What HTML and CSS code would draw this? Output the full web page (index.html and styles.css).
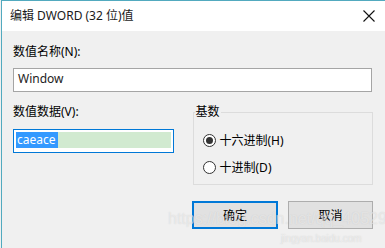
FILE: index.html
```html
<!DOCTYPE html>
<html lang="zh-CN">
<head>
    <meta charset="UTF-8">
    <meta name="viewport" content="width=device-width, initial-scale=1.0">
    <title>编辑 DWORD (32 位)值</title>
    <link rel="stylesheet" href="styles.css">
</head>
<body>
    <div class="window">
        <div class="titlebar">
            <span class="title">编辑 DWORD (32 位)值</span>
            <svg class="close" width="12" height="12" viewBox="0 0 12 12">
                <path d="M0.5 0.5 L11.5 11.5 M11.5 0.5 L0.5 11.5" stroke="#111" stroke-width="1.1" fill="none"/>
            </svg>
        </div>

        <div class="content">
            <div class="label">数值名称(N):</div>
            <div class="textbox name-box">Window</div>

            <div class="data-row">
                <div class="data-col">
                    <div class="label">数值数据(V):</div>
                    <div class="textbox data-box">
                        <div class="data-fill"><span class="selected">caeace</span></div>
                    </div>
                </div>

                <fieldset class="base-group">
                    <legend>基数</legend>
                    <div class="radio-row">
                        <span class="radio checked"></span>
                        <span>十六进制(H)</span>
                    </div>
                    <div class="radio-row">
                        <span class="radio"></span>
                        <span>十进制(D)</span>
                    </div>
                </fieldset>
            </div>

            <div class="buttons">
                <div class="btn btn-default">确定</div>
                <div class="btn">取消</div>
            </div>
        </div>

        <!-- watermark from the original screenshot -->
        <div class="watermark">https://blog.csdn.net/qq_40529</div>
        <div class="watermark-small">jingyan.baidu.com</div>
    </div>
</body>
</html>
```

FILE: styles.css
```css
body {
    margin: 0;
    background-color: #f0f0f0;
    font-family: "Noto Sans", "Noto Sans CJK SC", sans-serif;
    font-size: 12px;
    color: #000;
}
.window {
    position: relative;
    height: 247px;
    margin-left: 1px;
    border-top: 1px solid #52aabf;
    border-left: 1px solid #52aabf;
    background: #f0f0f0;
    overflow: hidden;
}
.titlebar {
    height: 30px;
    background: #fff;
    display: flex;
    align-items: center;
    padding-left: 8px;
    padding-right: 10px;
}
.title {
    flex: 1;
    color: #1a1a1a;
    line-height: 16px;
}
.close {
    display: block;
}
.content {
    padding: 13px 12px 0 11px;
}
.label {
    line-height: 16px;
}
.textbox {
    box-sizing: border-box;
    height: 24px;
    margin-top: 8px;
    line-height: 20px;
}
.name-box {
    width: 359px;
    border: 1px solid #a5a5a5;
    background: #fff;
    padding-left: 4px;
    color: #222;
}
.data-row {
    display: flex;
    margin-top: 12px;
}
.data-col {
    width: 161px;
}
.data-box {
    margin-top: 9px;
    border: 1px solid #0078d7;
    padding: 2px;
    background: #fff;
}
.data-fill {
    height: 16px;
    background: #d1ead0;
    line-height: 16px;
}
.selected {
    display: inline-block;
    height: 16px;
    padding: 0 2px 0 1px;
    background: #3399ff;
    color: #fff;
}
.base-group {
    width: 181px;
    box-sizing: border-box;
    margin: 0 0 0 19px;
    padding: 0 0 9px 9px;
    border: 1px solid #dcdcdc;
    min-width: 0;
}
.base-group legend {
    padding: 0 1px;
    margin-left: -8px;
    line-height: 16px;
}
.radio-row {
    display: flex;
    align-items: center;
    gap: 4px;
    height: 16px;
    margin-top: 11px;
}
.radio-row:first-of-type {
    margin-top: 12px;
}
.radio {
    box-sizing: border-box;
    width: 13px;
    height: 13px;
    border: 1px solid #333;
    border-radius: 50%;
    background: #fff;
    display: flex;
    align-items: center;
    justify-content: center;
}
.radio.checked::after {
    content: "";
    width: 7px;
    height: 7px;
    border-radius: 50%;
    background: #333;
}
.buttons {
    display: flex;
    justify-content: flex-end;
    gap: 10px;
    margin-top: 16px;
}
.btn {
    box-sizing: border-box;
    width: 85px;
    height: 28px;
    border: 1px solid #adadad;
    background: #e1e1e1;
    display: flex;
    align-items: center;
    justify-content: center;
}
.btn-default {
    width: 86px;
    border: 2px solid #0078d7;
}
.watermark {
    position: absolute;
    left: 166px;
    top: 209px;
    font-family: "Liberation Sans", sans-serif;
    font-size: 16px;
    color: rgba(255, 255, 255, 0.45);
    text-shadow: 0 0 1px rgba(170, 170, 170, 0.45);
    white-space: nowrap;
}
.watermark-small {
    position: absolute;
    left: 279px;
    top: 232px;
    font-family: "Liberation Sans", sans-serif;
    font-size: 10px;
    color: rgba(255, 255, 255, 0.5);
    text-shadow: 0 0 1px rgba(170, 170, 170, 0.5);
}
```
